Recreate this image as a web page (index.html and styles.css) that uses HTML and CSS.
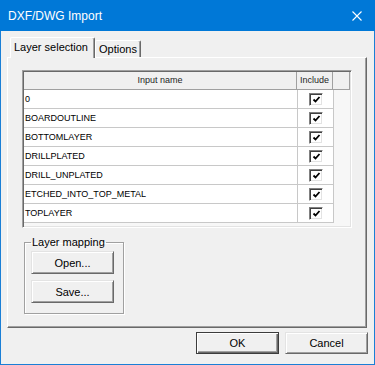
FILE: index.html
```html
<!DOCTYPE html>
<html>
<head>
<meta charset="utf-8">
<link rel="stylesheet" href="styles.css">
</head>
<body>
<div class="win">
  <div class="titlebar">
    <span class="title">DXF/DWG Import</span>
    <svg class="close" width="10" height="10" viewBox="0 0 10 10"><path d="M0.5 0.5 L9.5 9.5 M9.5 0.5 L0.5 9.5" stroke="#fff" stroke-width="1.1" fill="none"/></svg>
  </div>
  <div class="main">
    <div class="tabs">
      <div class="tab active">Layer selection</div>
      <div class="tab">Options</div>
    </div>
    <div class="panel">
      <div class="grid">
        <div class="row head">
          <div class="c1">Input name</div>
          <div class="c2">Include</div>
          <div class="c3"></div>
        </div>
        <div class="row"><div class="c1">0</div><div class="c2"><span class="cb"><svg width="9" height="9" viewBox="0 0 9 9"><path d="M1.5 4.5 L3.5 6.5 L7.5 2" stroke="#000" stroke-width="1.8" fill="none"/></svg></span></div></div>
        <div class="row"><div class="c1">BOARDOUTLINE</div><div class="c2"><span class="cb"><svg width="9" height="9" viewBox="0 0 9 9"><path d="M1.5 4.5 L3.5 6.5 L7.5 2" stroke="#000" stroke-width="1.8" fill="none"/></svg></span></div></div>
        <div class="row"><div class="c1">BOTTOMLAYER</div><div class="c2"><span class="cb"><svg width="9" height="9" viewBox="0 0 9 9"><path d="M1.5 4.5 L3.5 6.5 L7.5 2" stroke="#000" stroke-width="1.8" fill="none"/></svg></span></div></div>
        <div class="row"><div class="c1">DRILLPLATED</div><div class="c2"><span class="cb"><svg width="9" height="9" viewBox="0 0 9 9"><path d="M1.5 4.5 L3.5 6.5 L7.5 2" stroke="#000" stroke-width="1.8" fill="none"/></svg></span></div></div>
        <div class="row"><div class="c1">DRILL_UNPLATED</div><div class="c2"><span class="cb"><svg width="9" height="9" viewBox="0 0 9 9"><path d="M1.5 4.5 L3.5 6.5 L7.5 2" stroke="#000" stroke-width="1.8" fill="none"/></svg></span></div></div>
        <div class="row"><div class="c1">ETCHED_INTO_TOP_METAL</div><div class="c2"><span class="cb"><svg width="9" height="9" viewBox="0 0 9 9"><path d="M1.5 4.5 L3.5 6.5 L7.5 2" stroke="#000" stroke-width="1.8" fill="none"/></svg></span></div></div>
        <div class="row"><div class="c1">TOPLAYER</div><div class="c2"><span class="cb"><svg width="9" height="9" viewBox="0 0 9 9"><path d="M1.5 4.5 L3.5 6.5 L7.5 2" stroke="#000" stroke-width="1.8" fill="none"/></svg></span></div></div>
      </div>
      <fieldset class="group">
        <legend>Layer mapping</legend>
        <button class="btn">Open...</button>
        <button class="btn">Save...</button>
      </fieldset>
    </div>
    <div class="footer">
      <button class="btn default">OK</button>
      <button class="btn">Cancel</button>
    </div>
  </div>
</div>
</body>
</html>
```

FILE: styles.css
```css
html, body {
  margin: 0;
  padding: 0;
  background: #f0f0f0;
}
.win {
  width: 375px;
  height: 365px;
  box-sizing: border-box;
  border: 1px solid #1a7fd6;
  border-top: none;
  background: #f0f0f0;
  font-family: "Liberation Sans", Arial, sans-serif;
  font-size: 11px;
  color: #000;
  display: flex;
  flex-direction: column;
}
.titlebar {
  height: 31px;
  background: #0078d7;
  margin: 0 -1px;
  display: flex;
  align-items: center;
  justify-content: space-between;
  padding: 0 13px 0 8px;
  color: #fff;
  font-size: 12px;
}
.title {
  padding-top: 1px;
}
.close {
  display: block;
}
.main {
  padding: 6px 6px 0 6px;
  display: flex;
  flex-direction: column;
}
.tabs {
  display: flex;
  align-items: flex-end;
  height: 21px;
  padding-left: 3px;
  margin-bottom: -1px;
}
.tab {
  box-sizing: border-box;
  height: 18px;
  padding: 2px 3px 0 3px;
  border-top: 1px solid #fff;
  border-left: 1px solid #fff;
  border-right: 1px solid #696969;
  box-shadow: inset -1px 0 #a0a0a0;
  border-radius: 2px 2px 0 0;
  background: #f0f0f0;
  line-height: 13px;
}
.tab.active {
  height: 21px;
  width: 85px;
  padding: 3px 0 0 3px;
  position: relative;
  z-index: 1;
}
.panel {
  box-sizing: border-box;
  width: 360px;
  height: 271px;
  border-top: 1px solid #fff;
  border-left: 1px solid #fff;
  border-right: 1px solid #696969;
  border-bottom: 1px solid #696969;
  box-shadow: inset -1px -1px #a0a0a0;
  padding: 12px 0 0 14px;
  display: flex;
  flex-direction: column;
  align-items: flex-start;
}
.grid {
  box-sizing: border-box;
  width: 330px;
  height: 158px;
  border: 1px solid;
  border-color: #a0a0a0 #fff #fff #a0a0a0;
  box-shadow: inset 1px 1px #696969, inset -1px -1px #e3e3e3;
  padding: 1px;
  background: #f7f7f7;
  font-size: 9px;
}
.row {
  display: flex;
  height: 19px;
  line-height: 18px;
}
.row .c1 {
  box-sizing: border-box;
  width: 274px;
  background: #fff;
  border-right: 1px solid #c8c8c8;
  border-bottom: 1px solid #c8c8c8;
  padding-left: 1px;
  white-space: nowrap;
}
.row .c2 {
  box-sizing: border-box;
  width: 36px;
  background: #fff;
  border-right: 1px solid #c8c8c8;
  border-bottom: 1px solid #c8c8c8;
  display: flex;
  align-items: center;
  justify-content: center;
}
.row.head {
  height: 18px;
  line-height: 17px;
}
.row.head .c1,
.row.head .c2,
.row.head .c3 {
  background: #f0f0f0;
  border-right: 1px solid #a0a0a0;
  border-bottom: 1px solid #a0a0a0;
  text-align: center;
  padding: 0;
  color: #1e1e1e;
}
.row.head .c3 {
  box-sizing: border-box;
  width: 17px;
}
.cb {
  box-sizing: border-box;
  width: 14px;
  height: 13px;
  border: 1px solid;
  border-color: #808080 #fff #fff #808080;
  box-shadow: inset 1px 1px #404040, inset -1px -1px #e3e3e3;
  background: #fff;
  display: flex;
  align-items: center;
  justify-content: center;
  padding: 1px 0 0 1px;
}
.cb svg {
  display: block;
}
.group {
  box-sizing: border-box;
  width: 100px;
  height: 78px;
  margin: 8px 0 0 2px;
  padding: 0 7px 0 6px;
  border: 1px solid #a0a0a0;
  box-shadow: inset 1px 1px #fff, 1px 1px #fff;
  display: flex;
  flex-direction: column;
  gap: 6px;
}
.group legend {
  padding: 0 1px;
  line-height: 13px;
  font-size: 11px;
  margin-bottom: 2px;
}
.btn {
  box-sizing: border-box;
  width: 83px;
  height: 23px;
  font-family: "Liberation Sans", Arial, sans-serif;
  font-size: 11px;
  color: #000;
  background: #f0f0f0;
  border: 1px solid;
  border-color: #e3e3e3 #696969 #696969 #e3e3e3;
  box-shadow: inset 1px 1px #fff, inset -1px -1px #a0a0a0;
  padding: 0;
  margin: 0;
}
.footer {
  display: flex;
  justify-content: flex-end;
  gap: 6px;
  padding: 4px 0 0 0;
}
.footer .btn {
  height: 22px;
}
.btn.default {
  border-color: #3c3c3c;
  box-shadow: inset 1px 1px #fff, inset -1px -1px #696969, inset -2px -2px #a0a0a0;
}
```
